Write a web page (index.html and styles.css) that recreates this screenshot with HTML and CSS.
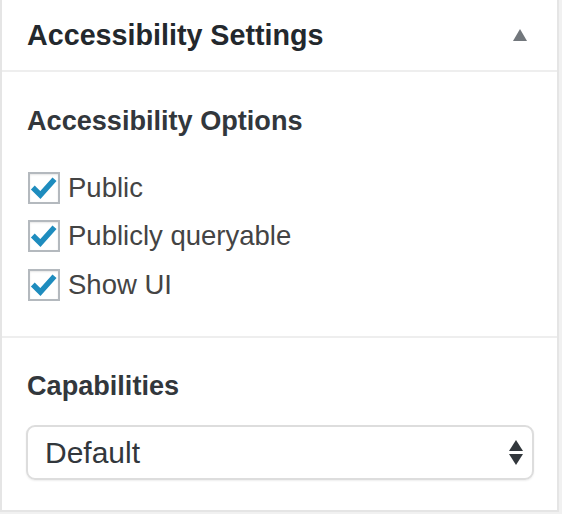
FILE: index.html
```html
<!DOCTYPE html>
<html>
<head>
<meta charset="utf-8">
<link rel="stylesheet" href="styles.css">
</head>
<body>
<div class="postbox">
  <div class="hndle">
    <h2 class="title">Accessibility Settings</h2>
    <span class="toggle"></span>
  </div>
  <div class="section">
    <h3 class="subtitle">Accessibility Options</h3>
    <ul class="checks">
      <li class="check"><span class="box"><svg viewBox="0 0 20 20" width="28" height="28"><path d="M3.4 11 L7.4 15 L16.2 5.2" fill="none" stroke="#1e8cbe" stroke-width="3.9" stroke-linecap="square"/></svg></span><span class="label">Public</span></li>
      <li class="check"><span class="box"><svg viewBox="0 0 20 20" width="28" height="28"><path d="M3.4 11 L7.4 15 L16.2 5.2" fill="none" stroke="#1e8cbe" stroke-width="3.9" stroke-linecap="square"/></svg></span><span class="label">Publicly queryable</span></li>
      <li class="check"><span class="box"><svg viewBox="0 0 20 20" width="28" height="28"><path d="M3.4 11 L7.4 15 L16.2 5.2" fill="none" stroke="#1e8cbe" stroke-width="3.9" stroke-linecap="square"/></svg></span><span class="label">Show UI</span></li>
    </ul>
  </div>
  <div class="section last">
    <h3 class="subtitle">Capabilities</h3>
    <div class="select">
      <span class="value">Default</span>
      <span class="arrows"><span class="up"></span><span class="down"></span></span>
    </div>
  </div>
</div>
</body>
</html>
```

FILE: styles.css
```css
* { box-sizing: border-box; }
html, body { margin: 0; padding: 0; }
body {
  background: #f1f1f1;
  font-family: "Liberation Sans", Arial, sans-serif;
  width: 562px;
  height: 514px;
  overflow: hidden;
}
.postbox {
  width: 559px;
  background: #fff;
  border: 2px solid #e5e5e5;
  border-top: none;
}
.hndle {
  height: 72px;
  border-bottom: 2px solid #eeeeee;
  display: flex;
  align-items: center;
  justify-content: space-between;
  padding: 0 30px 0 25px;
}
.title {
  margin: 0;
  font-size: 28.7px;
  font-weight: bold;
  color: #23282d;
}
.toggle {
  width: 0;
  height: 0;
  border-left: 7px solid transparent;
  border-right: 7px solid transparent;
  border-bottom: 12px solid #72777c;
}
.section {
  padding: 34px 24px 0 25px;
  border-bottom: 2px solid #eeeeee;
  height: 266px;
}
.section.last {
  border-bottom: none;
  height: 172px;
  padding-top: 33px;
}
.subtitle {
  margin: 0;
  font-size: 27.1px;
  font-weight: bold;
  color: #32373c;
  line-height: 30px;
}
.checks {
  list-style: none;
  margin: 35px 0 0 0;
  padding: 0;
  display: flex;
  flex-direction: column;
  gap: 15.5px;
}
.check {
  display: flex;
  align-items: center;
  height: 33px;
}
.box {
  width: 32px;
  height: 32px;
  border: 2px solid #b4b9be;
  margin-left: 1px;
  display: flex;
  align-items: center;
  justify-content: center;
  box-shadow: inset 0 1px 2px rgba(0,0,0,0.1);
}
.box svg { display: block; }
.label {
  margin-left: 8px;
  font-size: 27.5px;
  color: #444;
}
.select {
  margin-top: 24px;
  width: 508px;
  height: 55px;
  border: 2px solid #dddddd;
  border-radius: 9px;
  display: flex;
  align-items: center;
  justify-content: space-between;
  padding: 0 9px 0 17px;
  margin-left: -1px;
  box-shadow: 0 1px 2px rgba(0,0,0,0.07);
}
.value {
  font-size: 30px;
  color: #32373c;
}
.arrows {
  display: flex;
  flex-direction: column;
  gap: 3px;
}
.up, .down {
  width: 0;
  height: 0;
  border-left: 7px solid transparent;
  border-right: 7px solid transparent;
}
.up { border-bottom: 11px solid #32373c; }
.down { border-top: 11px solid #32373c; }
```
